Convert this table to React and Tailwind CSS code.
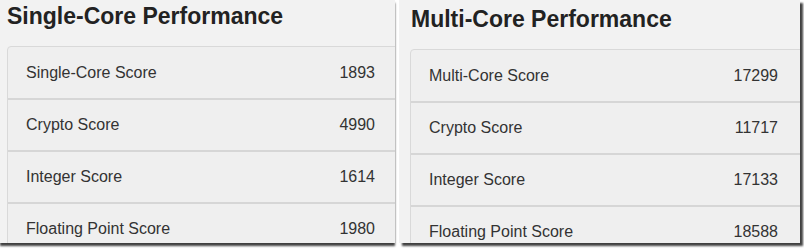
const single = [
  ["Single-Core Score", "1893"],
  ["Crypto Score", "4990"],
  ["Integer Score", "1614"],
  ["Floating Point Score", "1980"],
];

const multi = [
  ["Multi-Core Score", "17299"],
  ["Crypto Score", "11717"],
  ["Integer Score", "17133"],
  ["Floating Point Score", "18588"],
];

function ScoreCard({ rows }) {
  return (
    <div className="w-[400px] rounded-[4px] border border-[#d9d9d9] bg-[#efefef]">
      {rows.map(([label, value], i) => (
        <div
          key={label}
          className={
            i === 0
              ? "flex h-[51px] items-center justify-between pl-[18px] pr-[31px]"
              : "flex h-[52px] items-center justify-between border-t-2 border-[#d6d6d6] pl-[18px] pr-[31px]"
          }
        >
          <span>{label}</span>
          <span>{value}</span>
        </div>
      ))}
    </div>
  );
}

export default function App() {
  return (
    <div className="flex h-[249px] w-[804px] bg-white font-['Liberation_Sans',Arial,sans-serif] text-[16px] text-[#333]">
      <div className="h-[243px] w-[395px] shrink-0 overflow-hidden bg-[#f2f2f2] shadow-[0_3px_2px_rgba(0,0,0,0.75)]">
        <h2 className="pl-[7px] pt-[2px] text-[23px] font-bold leading-[28px] text-[#222]">
          Single-Core Performance
        </h2>
        <div className="mt-[16px] pl-[7px]">
          <ScoreCard rows={single} />
        </div>
      </div>
      <div className="w-[4px] shrink-0" />
      <div className="h-[243px] w-[401px] shrink-0 overflow-hidden bg-[#f2f2f2] shadow-[3px_3px_2px_rgba(0,0,0,0.75)]">
        <h2 className="pl-[12px] pt-[5px] text-[23px] font-bold leading-[28px] text-[#222]">
          Multi-Core Performance
        </h2>
        <div className="mt-[16px] pl-[11px]">
          <ScoreCard rows={multi} />
        </div>
      </div>
    </div>
  );
}
